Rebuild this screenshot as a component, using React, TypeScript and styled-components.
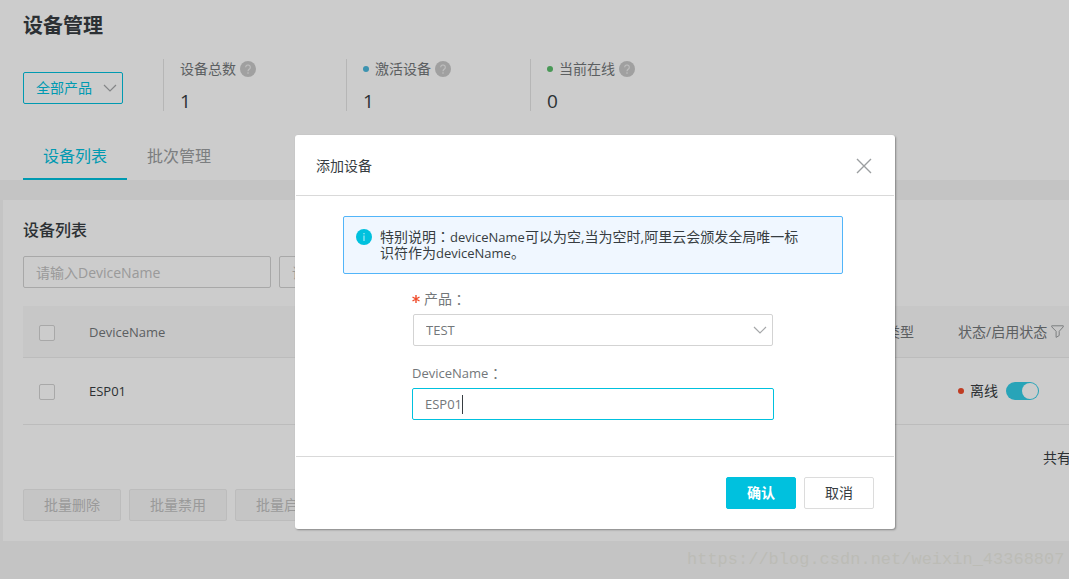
import React from 'react';
import styled, { createGlobalStyle } from 'styled-components';

const sans = `"Open Sans", "Noto Sans CJK SC", sans-serif`;

const GlobalStyle = createGlobalStyle`
  *, *::before, *::after { box-sizing: border-box; }
  body {
    margin: 0;
    background: #f5f5f5;
    color: #373d41;
    font-family: ${sans};
    font-size: 14px;
    line-height: 20px;
  }
  button, input, select { font: inherit; color: inherit; margin: 0; }
`;

const Viewport = styled.div`
  overflow: hidden;
`;

const Page = styled.div`
  position: relative;
  min-width: 1190px;
  min-height: 100vh;
`;

/* ---------- summary ---------- */

const Summary = styled.header`
  background: #fff;
  padding: 12px 20px 0 23px;
`;

const PageTitle = styled.h1`
  margin: 0;
  font-size: 20px;
  line-height: 28px;
  font-weight: 700;
`;

const Overview = styled.div`
  display: flex;
  gap: 40px;
  margin-top: 19px;
`;

const SelectWrap = styled.div<{ $width?: string }>`
  position: relative;
  width: ${(p) => p.$width ?? 'auto'};
  height: 32px;
`;

const ProductFilter = styled(SelectWrap)`
  margin-top: 13px;
`;

const Select = styled.select<{ $accent?: boolean }>`
  appearance: none;
  display: block;
  width: 100%;
  height: 32px;
  padding: 0 12px;
  border: 1px solid ${(p) => (p.$accent ? '#00c1de' : '#d3d3d3')};
  border-radius: 2px;
  background: #fff;
  color: ${(p) => (p.$accent ? '#00c1de' : '#73777a')};
  font-size: ${(p) => (p.$accent ? '14px' : '13px')};
  outline: none;
`;

const ChevronIcon = styled.svg`
  position: absolute;
  right: 6px;
  top: 12px;
  width: 14px;
  height: 8px;
  fill: none;
  stroke: #a5a7a9;
  stroke-width: 1.2;
  pointer-events: none;
`;

const Stats = styled.dl`
  display: grid;
  grid-template-columns: 183px 184px 184px;
  margin: 0;
`;

const Stat = styled.div`
  border-left: 1px solid #e4e4e4;
  padding-left: 16px;
`;

const StatLabel = styled.dt`
  display: flex;
  align-items: center;
  color: #73777a;
`;

const StatValue = styled.dd`
  margin: 12px 0 0;
  font-size: 19px;
  line-height: 20px;
`;

const Dot = styled.span<{ $color: string }>`
  flex: none;
  width: 6px;
  height: 6px;
  margin-right: 6px;
  border-radius: 50%;
  background: ${(p) => p.$color};
`;

const HelpIcon = styled.svg`
  width: 16px;
  height: 16px;
  margin-left: 4px;
`;

const Tabs = styled.div`
  display: flex;
  margin-top: 25px;
`;

const Tab = styled.button<{ $active?: boolean }>`
  height: 44px;
  padding: 0 20px 2px;
  border: 0;
  border-bottom: 2px solid ${(p) => (p.$active ? '#00c1de' : 'transparent')};
  background: none;
  color: ${(p) => (p.$active ? '#00c1de' : '#9b9ea0')};
  font-size: 16px;
`;

/* ---------- device list ---------- */

const Card = styled.main`
  margin: 20px 0 0 3px;
  padding: 20px;
  background: #fff;
`;

const CardTitle = styled.h2`
  margin: 0 0 16px;
  font-size: 16px;
  line-height: 20px;
  font-weight: 500;
`;

const ButtonRow = styled.div<{ $end?: boolean }>`
  display: flex;
  gap: 8px;
  justify-content: ${(p) => (p.$end ? 'flex-end' : 'flex-start')};
`;

const SearchInput = styled.input`
  width: 248px;
  height: 32px;
  padding: 0 12px;
  border: 1px solid #d3d3d3;
  border-radius: 2px;
  background: #fff;
  &::placeholder { color: #c1c1c1; opacity: 1; }
`;

const Table = styled.table`
  width: 100%;
  margin-top: 18px;
  table-layout: fixed;
  border-collapse: separate;
  border-spacing: 0;
  text-align: left;
`;

const HeadCell = styled.th<{ $width?: string }>`
  width: ${(p) => p.$width ?? 'auto'};
  height: 52px;
  padding: 0 0 0 16px;
  border-bottom: 1px solid #ebebeb;
  background: #f9f9f9;
  color: #73777a;
  font-weight: 400;
`;

const Cell = styled.td`
  height: 67px;
  padding: 0 0 0 16px;
  border-bottom: 1px solid #ebebeb;
`;

const Inline = styled.span`
  display: flex;
  align-items: center;
`;

const Latin = styled.span`
  font-size: 13px;
  line-height: 1;
`;

const Checkbox = styled.input`
  appearance: none;
  display: block;
  width: 16px;
  height: 16px;
  margin-top: 2px;
  border: 1px solid #d3d3d3;
  border-radius: 2px;
  background: #fff;
`;

const FilterIcon = styled.svg`
  width: 13px;
  height: 13px;
  margin-left: 4px;
  fill: none;
  stroke: #9b9ea0;
`;

const Switch = styled.input`
  appearance: none;
  width: 33px;
  height: 18px;
  margin-left: 8px;
  padding: 1px;
  border-radius: 9px;
  background: #32cde7;
  display: flex;
  justify-content: flex-end;
  &::after {
    content: '';
    width: 16px;
    height: 16px;
    border-radius: 50%;
    background: #fff;
  }
`;

const Pagination = styled.div`
  display: flex;
  align-items: center;
  justify-content: flex-end;
  height: 64px;
  padding: 2px 99px 0 0;
`;

const Button = styled.button<{ $primary?: boolean }>`
  height: 32px;
  padding: 0 20px;
  border: 1px solid ${(p) => (p.$primary ? '#00c1de' : '#dcdcdc')};
  border-radius: 2px;
  background: ${(p) => (p.$primary ? '#00c1de' : '#fff')};
  color: ${(p) => (p.$primary ? '#fff' : '#373d41')};
  font-weight: ${(p) => (p.$primary ? 700 : 400)};
  &:disabled {
    border-color: #ececec;
    background: #f7f7f7;
    color: #c1c1c1;
  }
`;

/* ---------- dialog ---------- */

const Overlay = styled.div`
  position: absolute;
  inset: 0;
  padding-top: 135px;
  background: rgba(0, 0, 0, 0.2);
`;

const Dialog = styled.section`
  width: 600px;
  margin: 0 auto;
  padding: 0 1px;
  border-radius: 3px;
  background: #fff;
  box-shadow: 1px 1px 2px rgba(0, 0, 0, 0.35);
`;

const DialogHeader = styled.div`
  display: flex;
  align-items: center;
  justify-content: space-between;
  height: 61px;
  padding: 2px 20px 0;
  border-bottom: 1px solid #d9d9d9;
`;

const DialogTitle = styled.h2`
  margin: 0;
  font-size: 14px;
  font-weight: 400;
`;

const CloseButton = styled.button`
  display: flex;
  padding: 2px;
  border: 0;
  background: none;
  svg { width: 16px; height: 16px; stroke: #9b9ea0; stroke-width: 1.4; }
`;

const DialogBody = styled.div`
  padding: 20px 51px 36px 47px;
`;

const Notice = styled.div`
  display: flex;
  gap: 8px;
  padding: 12px 30px 12px 12px;
  border: 1px solid #52b5f9;
  border-radius: 2px;
  background: #f0f7ff;
  line-height: 16px;
  svg { flex: none; width: 16px; height: 16px; }
  p { margin: 0; }
`;

const Form = styled.form`
  width: 362px;
  margin-left: 69px;
`;

const FieldLabel = styled.label`
  display: flex;
  align-items: center;
  height: 20px;
  margin: 15px 0 5px;
  color: #73777a;
`;

const SecondLabel = styled(FieldLabel)`
  margin-top: 17px;
`;

const Required = styled.span`
  display: flex;
  width: 12px;
  color: #f04c2b;
  svg { width: 8px; height: 8px; stroke: currentColor; stroke-width: 1.4; }
`;

/* Centres the full-width colon in its cell. */
const Colon = styled.span`
  font-family: "Noto Sans CJK TC", sans-serif;
  line-height: 1;
`;

const ProductSelect = styled(SelectWrap)`
  margin: 0 1px;
`;

const NameField = styled.div`
  position: relative;
`;

const NameInput = styled.input`
  display: block;
  width: 100%;
  height: 32px;
  padding: 0 12px;
  border: 1px solid #00c1de;
  border-radius: 2px;
  color: #73777a;
  font-size: 13px;
  outline: none;
`;

const Caret = styled.span`
  position: absolute;
  left: 50px;
  top: 7px;
  width: 1px;
  height: 19px;
  background: #373d41;
`;

const DialogFooter = styled.div`
  padding: 20px;
  border-top: 1px solid #d9d9d9;
`;

const Watermark = styled.div`
  position: absolute;
  left: 687px;
  top: 550px;
  color: #bcbcb6;
  font-family: "Liberation Mono", monospace;
  font-size: 17px;
  line-height: 20px;
`;

const Chevron = () => (
  <ChevronIcon viewBox="0 0 14 8" aria-hidden="true">
    <path d="M1 1l6 6 6-6" />
  </ChevronIcon>
);

const Help = () => (
  <HelpIcon viewBox="0 0 16 16" aria-hidden="true">
    <circle cx="8" cy="8" r="8" fill="#c9c9c9" />
    <path d="M5.7 6.3a2.3 2.3 0 1 1 3.5 2C8.400 8.800 8 9.200 8 10.200" fill="none" stroke="#f0f0f0" strokeWidth="1.100" />
    <circle cx="8" cy="12" r=".8" fill="#f0f0f0" />
  </HelpIcon>
);

const stats = [
  { label: '设备总数', value: 1, color: '' },
  { label: '激活设备', value: 1, color: '#4bb8dc' },
  { label: '当前在线', value: 0, color: '#5bbf6c' },
];

export default function App() {
  return (
    <Viewport>
      <GlobalStyle />
      <Page>
        <Summary>
          <PageTitle>设备管理</PageTitle>
          <Overview>
            <ProductFilter $width="100px">
              <Select $accent aria-label="产品">
                <option>全部产品</option>
              </Select>
              <Chevron />
            </ProductFilter>
            <Stats>
              {stats.map((s) => (
                <Stat key={s.label}>
                  <StatLabel>
                    {s.color && <Dot $color={s.color} />}
                    {s.label}
                    <Help />
                  </StatLabel>
                  <StatValue>{s.value}</StatValue>
                </Stat>
              ))}
            </Stats>
          </Overview>
          <Tabs role="tablist">
            <Tab role="tab" aria-selected="true" $active>设备列表</Tab>
            <Tab role="tab" aria-selected="false">批次管理</Tab>
          </Tabs>
        </Summary>

        <Card>
          <CardTitle>设备列表</CardTitle>
          <ButtonRow>
            <SearchInput placeholder="请输入DeviceName" aria-label="DeviceName" />
            <SearchInput placeholder="请" aria-label="备注" />
          </ButtonRow>
          <Table>
            <thead>
              <tr>
                <HeadCell $width="50px"><Checkbox type="checkbox" aria-label="全选" /></HeadCell>
                <HeadCell $width="769px"><Latin>DeviceName</Latin></HeadCell>
                <HeadCell $width="100px">节点类型</HeadCell>
                <HeadCell>
                  <Inline>
                    状态/启用状态
                    <FilterIcon viewBox="0 0 13 13" aria-hidden="true">
                      <path d="M.7.8h11.600v1L8.200 6.300v4.200l-3.100 1.900V6.300L.7 1.800z" />
                    </FilterIcon>
                  </Inline>
                </HeadCell>
              </tr>
            </thead>
            <tbody>
              <tr>
                <Cell><Checkbox type="checkbox" aria-label="ESP01" /></Cell>
                <Cell><Latin>ESP01</Latin></Cell>
                <Cell />
                <Cell>
                  <Inline>
                    <Dot $color="#f04c2b" />
                    离线
                    <Switch type="checkbox" role="switch" defaultChecked aria-label="启用状态" />
                  </Inline>
                </Cell>
              </tr>
            </tbody>
          </Table>
          <Pagination>共有</Pagination>
          <ButtonRow>
            <Button disabled>批量删除</Button>
            <Button disabled>批量禁用</Button>
            <Button disabled>批量启用</Button>
          </ButtonRow>
        </Card>

        <Overlay>
          <Dialog role="dialog" aria-labelledby="dialog-title">
            <DialogHeader>
              <DialogTitle id="dialog-title">添加设备</DialogTitle>
              <CloseButton aria-label="关闭">
                <svg viewBox="0 0 16 16"><path d="M1 1l14 14M15 1L1 15" /></svg>
              </CloseButton>
            </DialogHeader>
            <DialogBody>
              <Notice>
                <svg viewBox="0 0 16 16" aria-hidden="true">
                  <circle cx="8" cy="8" r="8" fill="#00c1de" />
                  <path d="M8 6.500v5.500M8 4v1.300" stroke="#c8f2f8" />
                </svg>
                <p>
                  特别说明<Colon>：</Colon><Latin>deviceName</Latin>可以为空,当为空时,阿里云会颁发全局唯一标识符作为<Latin>deviceName</Latin>。
                </p>
              </Notice>
              <Form>
                <FieldLabel htmlFor="product">
                  <Required>
                    <svg viewBox="0 0 8 8" aria-hidden="true"><path d="M4 0v8M.5 2l7 4M7.500 2l-7 4" /></svg>
                  </Required>
                  产品<Colon>：</Colon>
                </FieldLabel>
                <ProductSelect>
                  <Select id="product">
                    <option>TEST</option>
                  </Select>
                  <Chevron />
                </ProductSelect>
                <SecondLabel htmlFor="device-name">
                  <Latin>DeviceName</Latin><Colon>：</Colon>
                </SecondLabel>
                <NameField>
                  <NameInput id="device-name" defaultValue="ESP01" />
                  <Caret />
                </NameField>
              </Form>
            </DialogBody>
            <DialogFooter>
              <ButtonRow $end>
                <Button $primary>确认</Button>
                <Button>取消</Button>
              </ButtonRow>
            </DialogFooter>
          </Dialog>
          <Watermark>https://blog.csdn.net/weixin_43368807</Watermark>
        </Overlay>
      </Page>
    </Viewport>
  );
}
